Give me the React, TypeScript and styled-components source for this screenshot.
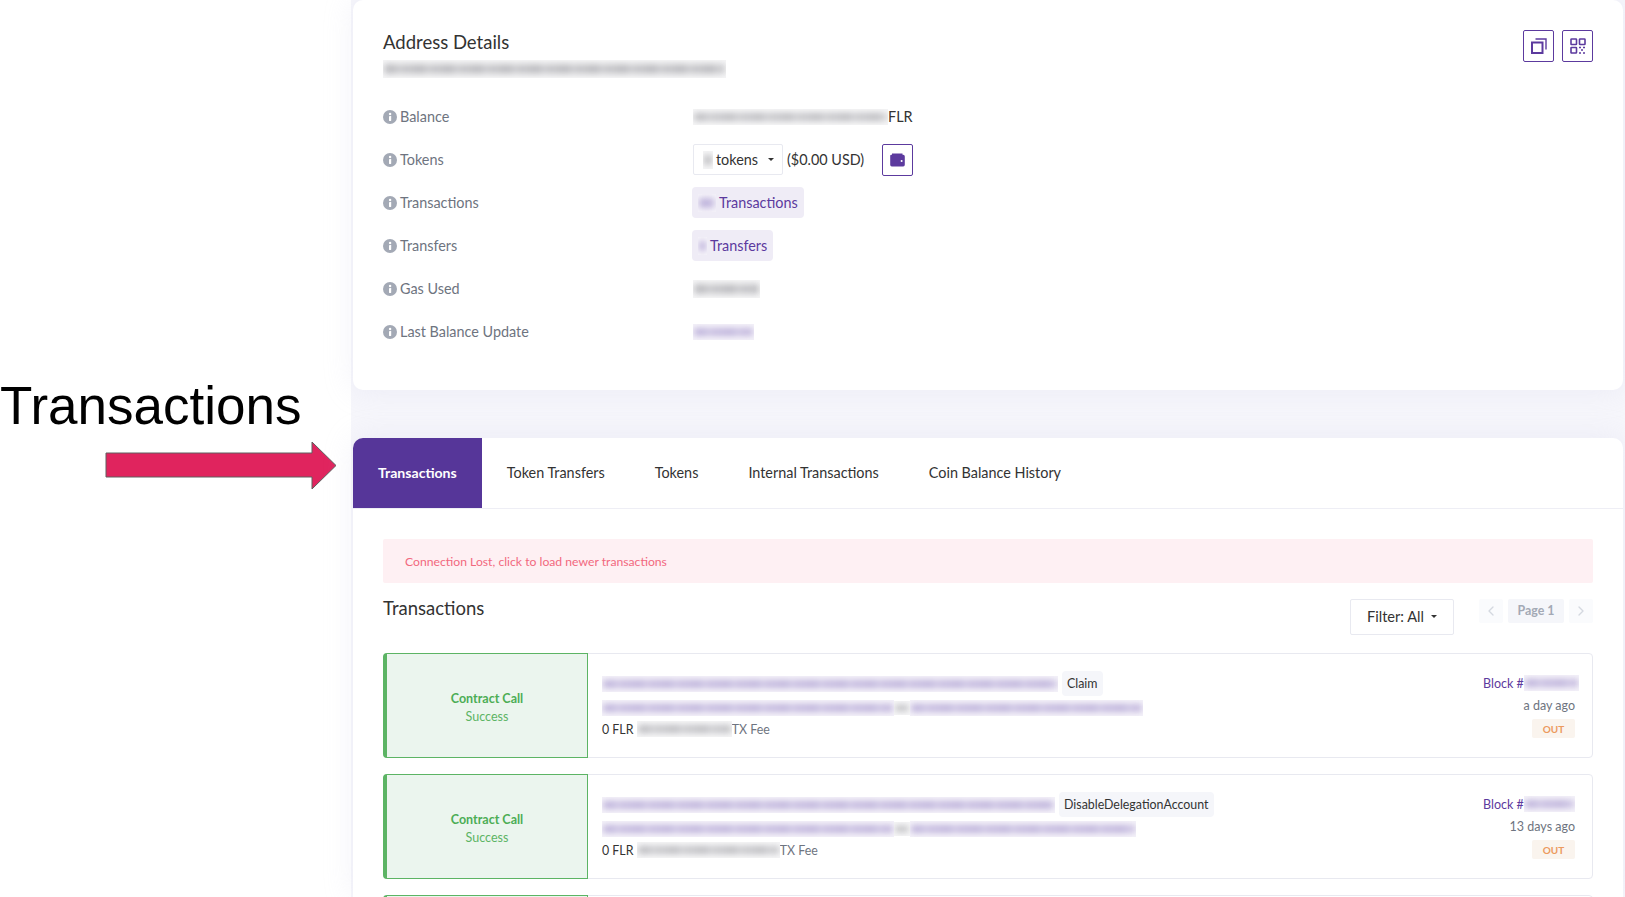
import React from 'react'
import styled, { createGlobalStyle } from 'styled-components'
import { ChevronLeft, ChevronRight } from 'lucide-react'

const GlobalStyle = createGlobalStyle`
  html, body {
    margin: 0;
    padding: 0;
    background: #fff;
    font-family: 'Lato', 'Noto Sans', sans-serif;
  }
  * { box-sizing: border-box; }
`

const purple = '#5c3a9e'

const Page = styled.div`
  display: flex;
  width: 100%;
  height: 897px;
  overflow: hidden;
  background: #fff;
`
const Note = styled.div`
  flex: 0 0 351px;
  padding-top: 376px;
  display: flex;
  flex-direction: column;
`
const NoteTitle = styled.div`
  font-family: 'Liberation Sans', Arial, sans-serif;
  font-size: 53px;
  line-height: 60px;
  color: #000;
  white-space: nowrap;
`
const NoteArrow = styled.svg`
  display: block;
  margin: 5px 0 0 105px;
`
const Main = styled.div`
  flex: 1;
  min-width: 0;
  background: #f6f6fb;
  padding: 0 2px;
  display: flex;
  flex-direction: column;
  gap: 48px;
`
const Card = styled.div`
  background: #fff;
  border-radius: 10px;
  box-shadow: 0 0 30px rgba(202, 199, 226, 0.22);
`
const DetailsCard = styled(Card)`
  flex: 0 0 390px;
  padding: 29px 30px 30px;
  position: relative;
`
const HeaderActions = styled.div`
  position: absolute;
  top: 30px;
  right: 30px;
  display: flex;
  gap: 8px;
`
const IconButton = styled.button`
  width: 31px;
  height: 32px;
  padding: 0;
  display: flex;
  align-items: center;
  justify-content: center;
  background: #fff;
  border: 1px solid ${purple};
  border-radius: 2px;
`
const CardTitle = styled.h1`
  margin: 0;
  font-size: 18.5px;
  font-weight: 400;
  line-height: 27px;
  color: #333;
`
const Redacted = styled.span<{ $w: number; $h?: number; $tone?: 'grey' | 'purple' }>`
  display: inline-block;
  flex: none;
  position: relative;
  width: ${(p) => p.$w}px;
  height: ${(p) => p.$h ?? 16}px;
  vertical-align: middle;
  overflow: hidden;
  background: ${(p) => (p.$tone === 'purple' ? '#f6f4fa' : '#f7f7f8')};

  &::before {
    content: '';
    position: absolute;
    left: 1px;
    right: 1px;
    top: 4px;
    bottom: 4px;
    filter: blur(3px);
    background: repeating-linear-gradient(
      90deg,
      ${(p) => (p.$tone === 'purple' ? '#c0b5dc' : '#c0c0c3')} 0 13px,
      ${(p) => (p.$tone === 'purple' ? '#d0c8e6' : '#d2d2d4')} 13px 17px,
      ${(p) => (p.$tone === 'purple' ? '#c4b9de' : '#c6c6c9')} 17px 29px
    );
  }
`
const AddressLine = styled.div`
  margin: 3px 0 0;
  height: 20px;
  display: flex;
  align-items: center;
`
const InfoRows = styled.div`
  margin-top: 16px;
  display: flex;
  flex-direction: column;
`
const InfoRow = styled.div`
  height: 43px;
  display: flex;
  align-items: center;
`
const InfoLabel = styled.div`
  flex: 0 0 310px;
  display: flex;
  align-items: center;
  gap: 3px;
  font-size: 14.4px;
  color: #6e7480;
`
const InfoValue = styled.div`
  display: flex;
  align-items: center;
  font-size: 14.4px;
  color: #333;
`
const Dropdown = styled.div`
  width: 90px;
  height: 31px;
  display: flex;
  align-items: center;
  padding-left: 9px;
  gap: 3px;
  border: 1px solid #e8e9f0;
  border-radius: 2px;
  background: #fff;
`
const Caret = styled.span`
  width: 0;
  height: 0;
  margin-left: 7px;
  border-left: 3.5px solid transparent;
  border-right: 3.5px solid transparent;
  border-top: 3.5px solid #333;
`
const UsdValue = styled.span`
  margin: 0 18px 0 4px;
`
const CountPill = styled.div`
  height: 31px;
  margin-left: -1px;
  display: flex;
  align-items: center;
  gap: 3px;
  padding: 0 6px;
  color: ${purple};
  background: #efecf6;
  border-radius: 4px;
`
const TabsCard = styled(Card)`
  flex: 1;
  min-height: 0;
  overflow: hidden;
  border-radius: 10px 10px 0 0;
`
const Tabs = styled.div`
  height: 71px;
  display: flex;
  border-bottom: 1px solid #eeeef5;
`
const Tab = styled.div<{ $active?: boolean }>`
  height: 70px;
  padding: 0 25px 2px;
  display: flex;
  align-items: center;
  font-size: ${(p) => (p.$active ? 14.1 : 14.4)}px;
  font-weight: ${(p) => (p.$active ? 700 : 400)};
  color: ${(p) => (p.$active ? '#fff' : '#333')};
  background: ${(p) => (p.$active ? '#563699' : 'transparent')};
  white-space: nowrap;
`
const TabBody = styled.div`
  padding: 30px 30px 0;
`
const Alert = styled.div`
  height: 44px;
  padding-left: 22px;
  display: flex;
  align-items: center;
  font-size: 12.2px;
  color: #f2687e;
  background: #fef0f3;
  border-radius: 2px;
`
const ListHeader = styled.div`
  margin-top: 16px;
  height: 54px;
  display: flex;
  align-items: flex-start;
`
const ListTitle = styled.h2`
  margin: 0;
  flex: 1;
  font-size: 18.5px;
  line-height: 18px;
  font-weight: 400;
  color: #333;
`
const FilterButton = styled.div`
  width: 104px;
  height: 36px;
  padding-bottom: 2px;
  display: flex;
  align-items: center;
  justify-content: center;
  font-size: 14.6px;
  color: #333;
  border: 1px solid #e8e9f0;
  border-radius: 2px;
`
const Pager = styled.div`
  margin-left: 25px;
  display: flex;
  gap: 5px;
`
const PagerArrow = styled.div`
  width: 24px;
  height: 24px;
  display: flex;
  align-items: center;
  justify-content: center;
  color: #d4d8e0;
  background: #fafbfd;
  border-radius: 2px;
`
const PagerLabel = styled.div`
  width: 56px;
  height: 24px;
  padding-bottom: 2px;
  display: flex;
  align-items: center;
  justify-content: center;
  font-size: 12.4px;
  font-weight: 700;
  color: #a3a9b5;
  background: #f5f6fa;
  border-radius: 2px;
`
const TxList = styled.div`
  display: flex;
  flex-direction: column;
  gap: 16px;
`
const TxRow = styled.div`
  flex: none;
  height: 105px;
  display: flex;
  border: 1px solid #e8e9f0;
  border-radius: 4px;
`
const TxStatus = styled.div`
  flex: 0 0 205px;
  margin: -1px 0 -1px -1px;
  padding-top: 3px;
  display: flex;
  flex-direction: column;
  align-items: center;
  justify-content: center;
  gap: 3px;
  background: #ebf5ee;
  border: 1px solid #5cb464;
  border-left-width: 4px;
  border-radius: 4px 0 0 4px;
`
const TxType = styled.div`
  font-size: 12.5px;
  font-weight: 700;
  line-height: 15px;
  color: #4cad55;
`
const TxResult = styled.div`
  font-size: 12.5px;
  line-height: 15px;
  color: #5cb464;
`
const TxMain = styled.div`
  flex: 1;
  padding: 17px 0 0 14px;
  display: flex;
  flex-direction: column;
`
const TxLine = styled.div<{ $mt?: number }>`
  display: flex;
  align-items: center;
  margin-top: ${(p) => p.$mt ?? 0}px;
  min-height: 16px;
  font-size: 12.4px;
  color: #333;
`
const MethodTag = styled.span`
  height: 25px;
  margin-left: 4px;
  padding: 0 5px;
  display: flex;
  align-items: center;
  background: #f5f6fa;
  border-radius: 4px;
`
const FeeLabel = styled.span`
  color: #6e7480;
`
const TxMeta = styled.div`
  flex: none;
  padding: 21px 17px 0 0;
  display: flex;
  flex-direction: column;
  align-items: flex-end;
  font-size: 12.5px;
`
const BlockLink = styled.div`
  width: 96px;
  height: 16px;
  margin-right: -4px;
  display: flex;
  align-items: center;
  white-space: nowrap;
  color: ${purple};
`
const TimeAgo = styled.div`
  margin-top: 7px;
  height: 16px;
  line-height: 16px;
  color: #6e7480;
`
const Direction = styled.div`
  margin-top: 5px;
  width: 43px;
  height: 19px;
  display: flex;
  align-items: center;
  justify-content: center;
  font-size: 10px;
  font-weight: 700;
  color: #ec9a5e;
  background: #faf4ee;
  border-radius: 2px;
`

const InfoIcon = () => (
  <svg width="14" height="14" viewBox="0 0 14 14">
    <circle cx="7" cy="7" r="7" fill="#a3a9b5" />
    <rect x="6" y="6" width="2.2" height="5" rx="0.4" fill="#fff" />
    <circle cx="7.1" cy="4" r="1.2" fill="#fff" />
  </svg>
)

const CopyIcon = () => (
  <svg width="18" height="18" viewBox="0 0 18 18" fill="none" stroke={purple} strokeWidth="2">
    <rect x="2" y="5.5" width="10.5" height="10.5" />
    <path d="M5.5 2h10.5v10.5" strokeWidth="1.4" />
  </svg>
)

const QrIcon = () => (
  <svg width="16" height="16" viewBox="0 0 16 16" fill="none" stroke={purple} strokeWidth="1.6">
    <rect x="1" y="1" width="5.5" height="5.5" rx="0.6" />
    <rect x="9.5" y="1" width="5.5" height="5.5" rx="0.6" />
    <rect x="1" y="9.5" width="5.5" height="5.5" rx="0.6" />
    <path d="M9 9.5h2M13 9.5h2M11 12h2M9 15h2M13 15h2" strokeWidth="1.5" />
  </svg>
)

const WalletIcon = () => (
  <svg width="15" height="14" viewBox="0 0 15 14">
    <path d="M2 0.5h10.5v2H2z" fill={purple} />
    <path
      d="M1.8 1.8h11.4a1.6 1.6 0 0 1 1.6 1.6v8.4a1.6 1.6 0 0 1-1.6 1.6H1.8A1.6 1.6 0 0 1 .2 11.8V2.6c0-.5.8-.8 1.6-.8z"
      fill={purple}
    />
    <circle cx="11.6" cy="8" r="1" fill="#fff" />
  </svg>
)

const details: { label: string; value: React.ReactNode }[] = [
  {
    label: 'Balance',
    value: (
      <>
        <Redacted $w={195} />
        FLR
      </>
    )
  },
  {
    label: 'Tokens',
    value: (
      <>
        <Dropdown>
          <Redacted $w={10} $h={18} />
          tokens
          <Caret />
        </Dropdown>
        <UsdValue>($0.00 USD)</UsdValue>
        <IconButton>
          <WalletIcon />
        </IconButton>
      </>
    )
  },
  {
    label: 'Transactions',
    value: (
      <CountPill>
        <Redacted $w={18} $h={18} $tone="purple" />
        Transactions
      </CountPill>
    )
  },
  {
    label: 'Transfers',
    value: (
      <CountPill>
        <Redacted $w={9} $h={18} $tone="purple" />
        Transfers
      </CountPill>
    )
  },
  { label: 'Gas Used', value: <Redacted $w={67} $h={18} /> },
  { label: 'Last Balance Update', value: <Redacted $w={61} $tone="purple" /> }
]

const tabs = ['Transactions', 'Token Transfers', 'Tokens', 'Internal Transactions', 'Coin Balance History']

const transactions = [
  { hash: 456, method: 'Claim', from: 292, to: 233, fee: 95, block: 55, time: 'a day ago' },
  { hash: 453, method: 'DisableDelegationAccount', from: 292, to: 226, fee: 143, block: 51, time: '13 days ago' }
]

export default function App() {
  return (
    <Page>
      <GlobalStyle />
      <Note>
        <NoteTitle>Transactions</NoteTitle>
        <NoteArrow width="232" height="49" viewBox="0 0 232 49">
          <path
            d="M1 12h206V1l24 23.5L207 48V36H1z"
            fill="#e0245e"
            stroke="#5f5f5f"
            strokeWidth="1"
          />
        </NoteArrow>
      </Note>
      <Main>
        <DetailsCard>
          <HeaderActions>
            <IconButton>
              <CopyIcon />
            </IconButton>
            <IconButton>
              <QrIcon />
            </IconButton>
          </HeaderActions>
          <CardTitle>Address Details</CardTitle>
          <AddressLine>
            <Redacted $w={343} $h={18} />
          </AddressLine>
          <InfoRows>
            {details.map((d) => (
              <InfoRow key={d.label}>
                <InfoLabel>
                  <InfoIcon />
                  {d.label}
                </InfoLabel>
                <InfoValue>{d.value}</InfoValue>
              </InfoRow>
            ))}
          </InfoRows>
        </DetailsCard>
        <TabsCard>
          <Tabs>
            {tabs.map((t, i) => (
              <Tab key={t} $active={i === 0}>
                {t}
              </Tab>
            ))}
          </Tabs>
          <TabBody>
            <Alert>Connection Lost, click to load newer transactions</Alert>
            <ListHeader>
              <ListTitle>Transactions</ListTitle>
              <FilterButton>
                Filter: All
                <Caret />
              </FilterButton>
              <Pager>
                <PagerArrow>
                  <ChevronLeft size={16} />
                </PagerArrow>
                <PagerLabel>Page 1</PagerLabel>
                <PagerArrow>
                  <ChevronRight size={16} />
                </PagerArrow>
              </Pager>
            </ListHeader>
            <TxList>
              {transactions.map((tx) => (
                <TxRow key={tx.method}>
                  <TxStatus>
                    <TxType>Contract Call</TxType>
                    <TxResult>Success</TxResult>
                  </TxStatus>
                  <TxMain>
                    <TxLine>
                      <Redacted $w={tx.hash} $tone="purple" />
                      <MethodTag>{tx.method}</MethodTag>
                    </TxLine>
                    <TxLine $mt={4}>
                      <Redacted $w={tx.from} $tone="purple" />
                      <Redacted $w={16} $h={14} />
                      <Redacted $w={tx.to} $tone="purple" />
                    </TxLine>
                    <TxLine $mt={5}>
                      0 FLR&nbsp;
                      <Redacted $w={tx.fee} />
                      <FeeLabel>TX Fee</FeeLabel>
                    </TxLine>
                  </TxMain>
                  <TxMeta>
                    <BlockLink>
                      Block #
                      <Redacted $w={tx.block} $tone="purple" />
                    </BlockLink>
                    <TimeAgo>{tx.time}</TimeAgo>
                    <Direction>OUT</Direction>
                  </TxMeta>
                </TxRow>
              ))}
              {/* only the top edge of the third row is in view */}
              <TxRow>
                <TxStatus />
              </TxRow>
            </TxList>
          </TabBody>
        </TabsCard>
      </Main>
    </Page>
  )
}
